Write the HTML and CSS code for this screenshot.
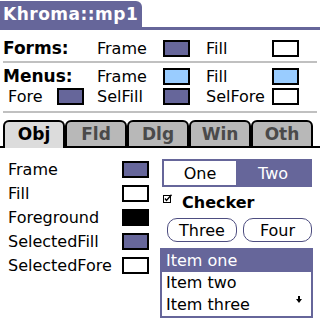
FILE: index.html
```html
<!DOCTYPE html>
<html>
<head>
<meta charset="utf-8">
<link rel="stylesheet" href="styles.css">
</head>
<body>
<div class="title"><div class="title-tab">Khroma::mp1</div></div>

<div class="top">
  <div class="row">
    <span class="head">Forms:</span>
    <span class="lbl">Frame</span>
    <span class="sw purple"></span>
    <span class="lbl">Fill</span>
    <span class="sw white"></span>
  </div>
  <div class="sep"></div>
  <div class="row">
    <span class="head">Menus:</span>
    <span class="lbl">Frame</span>
    <span class="sw blue"></span>
    <span class="lbl">Fill</span>
    <span class="sw blue"></span>
  </div>
  <div class="row">
    <span class="fore-cell"><span class="fore-lbl">Fore</span><span class="sw purple"></span></span>
    <span class="lbl">SelFill</span>
    <span class="sw purple"></span>
    <span class="lbl">SelFore</span>
    <span class="sw white"></span>
  </div>
  <div class="sep sep2"></div>
</div>

<div class="tabs">
  <div class="tab-edge"></div>
  <div class="tab active">Obj</div>
  <div class="tab">Fld</div>
  <div class="tab">Dlg</div>
  <div class="tab">Win</div>
  <div class="tab">Oth</div>
  <div class="tab-fill"></div>
</div>

<div class="lower">
  <div class="left">
    <div class="lrow"><span>Frame</span><span class="sw purple"></span></div>
    <div class="lrow"><span>Fill</span><span class="sw white"></span></div>
    <div class="lrow"><span>Foreground</span><span class="sw black"></span></div>
    <div class="lrow"><span>SelectedFill</span><span class="sw purple"></span></div>
    <div class="lrow"><span>SelectedFore</span><span class="sw white"></span></div>
  </div>
  <div class="right">
    <div class="seg">
      <div class="seg-item seg-off">One</div>
      <div class="seg-item seg-on">Two</div>
    </div>
    <div class="check-row">
      <svg class="cbox" width="10" height="10" viewBox="0 0 10 10">
        <rect x="0.5" y="1.5" width="7" height="7" fill="none" stroke="#000" stroke-width="1"/>
        <polyline points="2,4.5 3.5,6.5 8.5,0.8" fill="none" stroke="#000" stroke-width="1.4"/>
      </svg>
      <span class="checker">Checker</span>
    </div>
    <div class="btns">
      <div class="btn three">Three</div>
      <div class="btn four">Four</div>
    </div>
    <div class="list">
      <div class="item sel">Item one</div>
      <div class="item">Item two</div>
      <div class="item">Item three</div>
      <svg class="arrow" width="6" height="7" viewBox="0 0 6 7">
        <rect x="2" y="0" width="2" height="3" fill="#000"/>
        <polygon points="0,3 6,3 3,7" fill="#000"/>
      </svg>
    </div>
  </div>
</div>
</body>
</html>
```

FILE: styles.css
```css
body {
  margin: 0;
  width: 320px;
  height: 320px;
  overflow: hidden;
  background: #fff;
  color: #000;
  font-family: "DejaVu Sans", "Liberation Sans", sans-serif;
  font-size: 16px;
}

.title {
  height: 30px;
  box-sizing: border-box;
  border-bottom: 3px solid #66669a;
  display: flex;
  align-items: flex-end;
}

.title-tab {
  width: 142px;
  height: 26px;
  box-sizing: border-box;
  padding-left: 3px;
  background: #66669a;
  color: #fff;
  font-weight: bold;
  font-size: 17px;
  letter-spacing: 0.5px;
  line-height: 26px;
  white-space: nowrap;
  border-top-right-radius: 6px;
}

.top {
  margin-top: 8px;
}

.row {
  display: grid;
  grid-template-columns: 94px 66px 43px 66px 27px;
  height: 20px;
  align-items: center;
  padding-left: 3px;
}

.head {
  font-weight: bold;
  font-size: 17px;
  white-space: nowrap;
}

.lbl {
  padding-top: 1px;
  white-space: nowrap;
}

.fore-cell {
  display: flex;
  align-items: center;
  padding-left: 5px;
}

.fore-lbl {
  width: 49px;
  padding-top: 1px;
}

.sw {
  display: block;
  width: 27px;
  height: 17px;
  box-sizing: border-box;
  border: 2px solid #000;
}

.purple { background: #66669a; }
.white { background: #fff; }
.blue { background: #99ccff; }
.black { background: #000; }

.sep {
  height: 2px;
  background: #c0c0c0;
  margin: 3px 3px 3px 3px;
}

.sep2 {
  margin-top: 5px;
  margin-bottom: 0;
}

.tabs {
  display: flex;
  height: 28px;
  margin-top: 7px;
}

.tab-edge {
  width: 3px;
  border-bottom: 2px solid #000;
}

.tab-fill {
  flex: 1;
  border-bottom: 2px solid #000;
}

.tab {
  width: 62px;
  box-sizing: border-box;
  border: 2px solid #000;
  border-radius: 6px 6px 0 0;
  background: #b8b8b8;
  color: #4a4a4a;
  font-weight: bold;
  font-size: 17px;
  display: flex;
  align-items: center;
  justify-content: center;
}

.tab.active {
  border-bottom: none;
  padding-bottom: 2px;
  background: #dcdcdc;
  color: #000;
}

.lower {
  display: flex;
  margin-top: 9px;
}

.left {
  width: 141px;
  padding-left: 8px;
}

.lrow {
  display: flex;
  justify-content: space-between;
  align-items: center;
  height: 24px;
}

.right {
  width: 153px;
  margin-left: 11px;
  margin-top: 2px;
  display: flex;
  flex-direction: column;
}

.seg {
  display: flex;
  width: 150px;
  height: 28px;
  margin-left: 2px;
  box-sizing: border-box;
  border: 2px solid #66669a;
}

.seg-item {
  display: flex;
  align-items: center;
  justify-content: center;
}

.seg-off {
  width: 72px;
  background: #fff;
}

.seg-on {
  flex: 1;
  background: #66669a;
  color: #fff;
}

.check-row {
  display: flex;
  align-items: flex-start;
  height: 20px;
  margin-top: 6px;
  margin-left: 3px;
}

.cbox {
  margin-top: 1px;
  margin-right: 9px;
}

.checker {
  font-weight: bold;
  line-height: 20px;
}

.btns {
  display: flex;
  gap: 6px;
  margin-top: 5px;
  margin-left: 7px;
}

.btn {
  height: 24px;
  box-sizing: border-box;
  border: 1.5px solid #4d4d80;
  border-radius: 10px;
  display: flex;
  align-items: center;
  justify-content: center;
}

.three { width: 70px; }
.four { width: 69px; }

.list {
  position: relative;
  width: 153px;
  margin-top: 6px;
  box-sizing: border-box;
  border: 2px solid #66669a;
}

.item {
  height: 22px;
  line-height: 22px;
  padding-left: 4px;
}

.item.sel {
  background: #66669a;
  color: #fff;
}

.arrow {
  position: absolute;
  right: 9px;
  top: 46px;
}
```
